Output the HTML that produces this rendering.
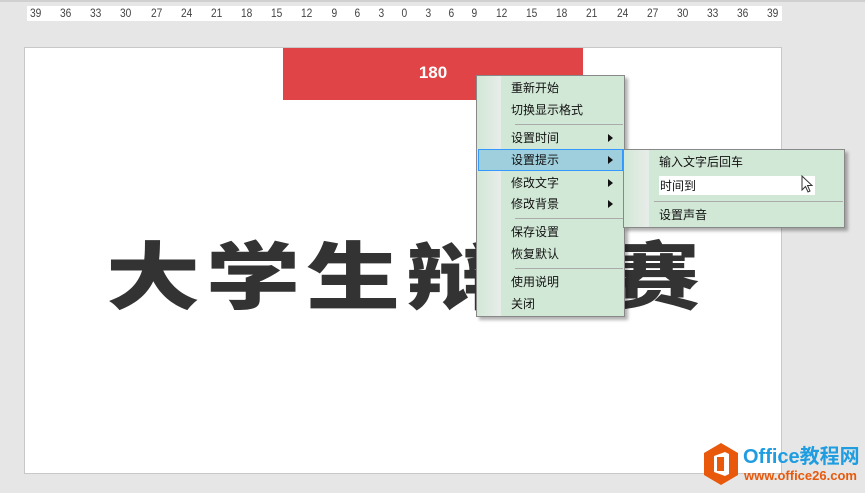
<!DOCTYPE html>
<html><head><meta charset="utf-8"><style>
*{margin:0;padding:0;box-sizing:border-box}
body{width:865px;height:493px;background:#e6e6e6;position:relative;overflow:hidden;font-family:"Liberation Sans","Noto Sans CJK SC",sans-serif}
.top{position:absolute;left:0;top:0;width:865px;height:2px;background:#d0d0d0}
.ruler{position:absolute;left:27px;top:6px;width:755px;height:15px;background:#fff;font-size:12px;color:#444;display:flex;justify-content:space-between;padding:0 2px;line-height:15px;transform-origin:left}
.ruler span{display:inline-block;transform:scaleX(0.85)}
.slide{position:absolute;left:24px;top:47px;width:758px;height:427px;background:#fff;border:1px solid #c8c8c8}
.red{position:absolute;left:283px;top:48px;width:300px;height:52px;background:#e04446;color:#fff;font-weight:bold;font-size:17px;text-align:center;line-height:50px}
.title{position:absolute;left:106px;top:222px;font-family:"Noto Sans CJK SC",sans-serif;font-weight:900;font-size:94px;color:#333;letter-spacing:6px;line-height:100px;white-space:nowrap;transform:scaleY(0.78);transform-origin:0 50%}
.menu{position:absolute;background:#d2e8d6;border:1px solid #888;box-shadow:3px 3px 3px rgba(0,0,0,.3);font-size:12px;color:#111}
.strip{position:absolute;left:0;top:0;bottom:0;background:linear-gradient(90deg,#d2e8d6,#e8ece9)}
.it{position:absolute;white-space:nowrap}
.sep{position:absolute;height:1px;background:#aaa}
.arr{position:absolute;width:0;height:0;border-left:5px solid #111;border-top:4px solid transparent;border-bottom:4px solid transparent}
</style></head><body>
<div class="top"></div>
<div class="ruler"><span>39</span><span>36</span><span>33</span><span>30</span><span>27</span><span>24</span><span>21</span><span>18</span><span>15</span><span>12</span><span>9</span><span>6</span><span>3</span><span>0</span><span>3</span><span>6</span><span>9</span><span>12</span><span>15</span><span>18</span><span>21</span><span>24</span><span>27</span><span>30</span><span>33</span><span>36</span><span>39</span></div>
<div class="slide"></div>
<div class="red">180</div>
<div class="title">大学生辩论赛</div>

<div class="menu" style="left:476px;top:75px;width:149px;height:242px">
<div class="strip" style="width:24px"></div>
<div class="it" style="left:34px;top:3px">重新开始</div>
<div class="it" style="left:34px;top:25px">切换显示格式</div>
<div class="sep" style="left:38px;top:48px;width:108px"></div>
<div class="it" style="left:34px;top:53px">设置时间</div><div class="arr" style="left:131px;top:58px"></div>
<div style="position:absolute;left:1px;top:73px;width:145px;height:22px;background:#9fcfdc;border:1px solid #3399ff"></div>
<div class="it" style="left:34px;top:75px">设置提示</div><div class="arr" style="left:131px;top:80px"></div>
<div class="it" style="left:34px;top:98px">修改文字</div><div class="arr" style="left:131px;top:103px"></div>
<div class="it" style="left:34px;top:119px">修改背景</div><div class="arr" style="left:131px;top:124px"></div>
<div class="sep" style="left:38px;top:142px;width:108px"></div>
<div class="it" style="left:34px;top:147px">保存设置</div>
<div class="it" style="left:34px;top:169px">恢复默认</div>
<div class="sep" style="left:38px;top:192px;width:108px"></div>
<div class="it" style="left:34px;top:197px">使用说明</div>
<div class="it" style="left:34px;top:219px">关闭</div>
</div>

<div class="menu" style="left:623px;top:149px;width:222px;height:79px">
<div class="strip" style="width:25px"></div>
<div class="it" style="left:35px;top:3px">输入文字后回车</div>
<div style="position:absolute;left:35px;top:26px;width:156px;height:19px;background:#fff"></div>
<div class="it" style="left:36px;top:27px">时间到</div>
<svg style="position:absolute;left:177px;top:25px" width="14" height="20" viewBox="0 0 14 20"><path d="M1 1 L1 15 L4.5 11.5 L7 17 L9 16 L6.5 10.5 L11 10.5 Z" fill="#fff" stroke="#333" stroke-width="1"/></svg>
<div class="sep" style="left:30px;top:51px;width:189px"></div>
<div class="it" style="left:35px;top:56px">设置声音</div>
</div>

<svg style="position:absolute;left:702px;top:442px" width="38" height="44" viewBox="0 0 38 44"><path d="M19 1 L36 11 L36 33 L19 43 L2 33 L2 11 Z" fill="#e8590c"/><path d="M12 14 L23 10 L27 12 L27 32 L23 34 L12 30 Z" fill="#fff"/><rect x="15" y="15" width="7" height="14" fill="#e8590c"/></svg>
<div style="position:absolute;left:743px;top:446px;font-size:20px;font-weight:bold;color:#1f9de0;white-space:nowrap;line-height:22px">Office教程网</div>
<div style="position:absolute;left:744px;top:469px;font-size:13px;font-weight:bold;color:#e8590c;white-space:nowrap;line-height:14px">www.office26.com</div>
</body></html>
